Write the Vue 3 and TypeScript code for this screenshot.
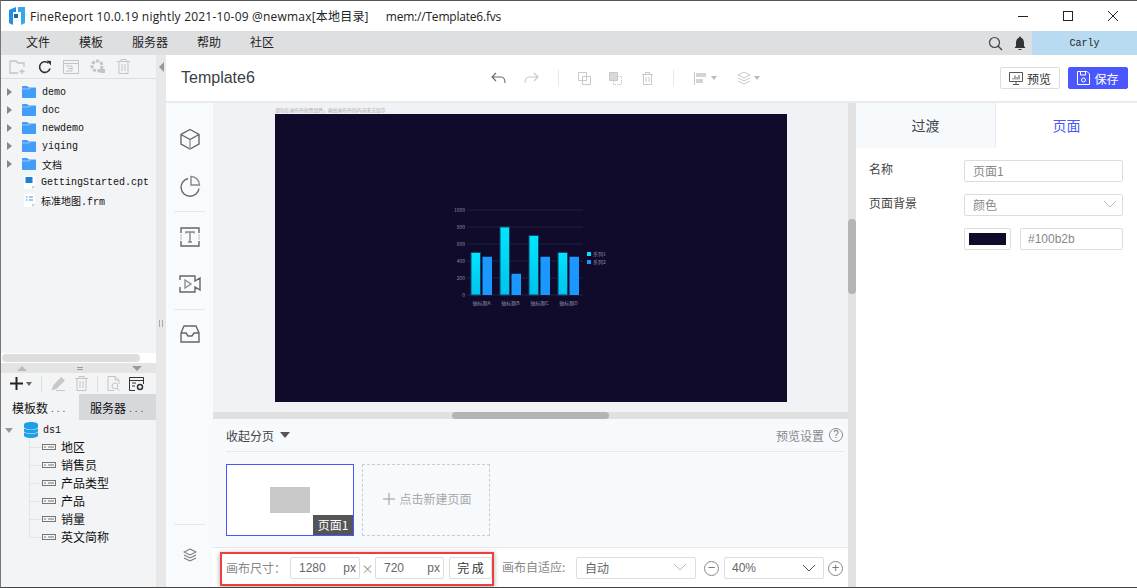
<script setup lang="ts">
const menus = ['文件', '模板', '服务器', '帮助', '社区']
const folders = ['demo', 'doc', 'newdemo', 'yiqing', '文档']
const fields = ['地区', '销售员', '产品类型', '产品', '销量', '英文简称']

const ticks = [
  { y: 210, label: '1000' },
  { y: 227, label: '800' },
  { y: 244, label: '600' },
  { y: 261, label: '400' },
  { y: 278, label: '200' },
  { y: 295, label: '0' }
]
const groups = [
  { x: 471, a: 500, b: 450, label: '轴标题A' },
  { x: 500, a: 800, b: 250, label: '轴标题B' },
  { x: 529, a: 700, b: 450, label: '轴标题C' },
  { x: 558, a: 500, b: 450, label: '轴标题D' }
]
const barH = (v: number) => (v / 1000) * 85
</script>

<template>
  <div class="win">
    <header class="titlebar">
      <svg class="logo" width="16" height="18" viewBox="0 0 16 18">
        <path d="M0 3 L7 0 V5 H4 V18 L0 16 Z" fill="#1f8fe6" />
        <path d="M5 7 H9 V11 H5 Z" fill="#1268b8" />
        <path d="M9 0 H16 V16 L12 18 V5 H9 Z" fill="#35a6f0" />
      </svg>
      <span class="title main-title">FineReport 10.0.19 nightly 2021-10-09 @newmax[本地目录]</span>
      <span class="title path">mem://Template6.fvs</span>
      <div class="winbtns">
        <svg width="12" height="12" viewBox="0 0 12 12"><path d="M1 6.500H11" stroke="#222" /></svg>
        <svg width="12" height="12" viewBox="0 0 12 12"><rect x="1.500" y="1.500" width="9" height="9" fill="none" stroke="#222" /></svg>
        <svg width="12" height="12" viewBox="0 0 12 12"><path d="M1 1L11 11M11 1L1 11" stroke="#222" /></svg>
      </div>
    </header>

    <nav class="menubar">
      <span v-for="m in menus" :key="m" class="menu">{{ m }}</span>
      <div class="menu-right">
        <svg width="15" height="15" viewBox="0 0 15 15"><circle cx="6.500" cy="6.500" r="5" fill="none" stroke="#444" stroke-width="1.200" /><path d="M10 10L14 14" stroke="#444" stroke-width="1.400" /></svg>
        <svg class="bell" width="12" height="15" viewBox="0 0 12 15"><path d="M6 0.500C6.800 0.500 7 1.200 7 1.800C9.200 2.500 10 4.500 10 7V10L11.500 12H0.500L2 10V7C2 4.500 2.800 2.500 5 1.800C5 1.200 5.200 0.500 6 0.500Z" fill="#333" /><path d="M4.500 13.500H7.500" stroke="#333" /></svg>
        <div class="user">Carly</div>
      </div>
    </nav>

    <div class="body">
      <aside class="left">
        <div class="left-tools">
          <svg width="18" height="16" viewBox="0 0 18 16"><path d="M1 2H7L9 4H15V8M9 14H1V2M13 10V15M10.500 12.500H15.500" fill="none" stroke="#c4c4c4" stroke-width="1.300" /></svg>
          <svg width="14" height="14" viewBox="0 0 14 14"><path d="M12 8.500A5.300 5.300 0 1 1 10.500 3.200" fill="none" stroke="#333" stroke-width="1.600" /><path d="M8.500 0.500L13 1V5.500Z" fill="#333" /></svg>
          <svg width="16" height="14" viewBox="0 0 16 14"><path d="M0.500 0.500H15.500V13.500H0.500ZM0.500 3.500H15.500M3 6H9V11H3M5 8.500H9" fill="none" stroke="#c4c4c4" /></svg>
          <svg width="16" height="15" viewBox="0 0 16 15"><circle cx="7" cy="7" r="5" fill="none" stroke="#c4c4c4" stroke-width="3" stroke-dasharray="3 1.400" /><rect x="10" y="10" width="5" height="4" fill="#c4c4c4" /></svg>
          <svg width="13" height="15" viewBox="0 0 13 15"><path d="M0 2.500H13M4 2.500V0.500H9V2.500M2 2.500V14.500H11V2.500M5 5V12M8 5V12" fill="none" stroke="#c4c4c4" /></svg>
        </div>
        <div class="tree">
          <div v-for="f in folders" :key="f" class="row">
            <i class="arrow"></i>
            <svg width="14" height="12" viewBox="0 0 14 12"><path d="M0 1C0 .4.4 0 1 0H5L7 1.600H13C13.600 1.600 14 2 14 2.600V11C14 11.600 13.600 12 13 12H1C.4 12 0 11.600 0 11Z" fill="#439cf8" /><path d="M0 3H7L9 1.600" fill="none" stroke="#b8dcfd" stroke-width=".7" /></svg>
            <span class="mono">{{ f }}</span>
          </div>
          <div class="row file">
            <svg width="11" height="13" viewBox="0 0 11 13"><path d="M0 0H11V10L8 13H0Z" fill="#fff" /><rect x="1.500" y="1" width="7" height="6" fill="#1f80d8" /><path d="M8 13V10H11Z" fill="#ccc" /></svg>
            <span class="mono">GettingStarted.cpt</span>
          </div>
          <div class="row file">
            <svg width="11" height="13" viewBox="0 0 11 13"><path d="M0 0H11V10L8 13H0Z" fill="#fff" /><path d="M2 3H3.500M5 3H9M2 6H3.500M5 6H9" stroke="#3d8fd8" /><path d="M8 13V10H11Z" fill="#ccc" /></svg>
            <span class="mono">标准地图.frm</span>
          </div>
        </div>
        <div class="hscroll"><div class="hthumb"></div></div>
        <div class="grip">
          <i class="tri-up"></i>
          <span class="equals"></span>
          <i class="tri-down"></i>
        </div>
        <div class="ds-tools">
          <svg width="15" height="15" viewBox="0 0 15 15"><path d="M7.500 1V14M1 7.500H14" stroke="#222" stroke-width="2" /></svg>
          <i class="tri-small"></i>
          <b class="vsep"></b>
          <svg width="15" height="15" viewBox="0 0 15 15"><path d="M1 14L3 9L10 1.500L13.500 4.500L6 12ZM5 14.500H14" fill="#c8c8c8" stroke="#c8c8c8" /></svg>
          <svg width="13" height="15" viewBox="0 0 13 15"><path d="M0 2.500H13M4 2.500V.5H9V2.500M2 2.500V14.500H11V2.500M5 5V12M8 5V12" fill="none" stroke="#c4c4c4" /></svg>
          <b class="vsep"></b>
          <svg width="13" height="15" viewBox="0 0 13 15"><path d="M7 14.500H1V.5H8L12 4V8M8 .5V4H12" fill="none" stroke="#c4c4c4" /><circle cx="8" cy="10" r="3" fill="none" stroke="#c4c4c4" /><path d="M10 12.500L12.500 14.500" stroke="#c4c4c4" /></svg>
          <svg width="15" height="14" viewBox="0 0 15 14"><path d="M6 13.500H.5V.5H14.500V7M.5 3.500H14.500M3 6H7M3 9H6" fill="none" stroke="#333" /><circle cx="11" cy="10" r="2.500" fill="none" stroke="#333" stroke-width="1.500" /></svg>
        </div>
        <div class="tabs">
          <div class="tab on">模板数<em>...</em></div>
          <div class="tab">服务器<em>...</em></div>
        </div>
        <div class="ds">
          <div class="ds-root">
            <i class="arrow down"></i>
            <svg width="14" height="16" viewBox="0 0 14 16"><path d="M0 2.500C0 1 3 0 7 0S14 1 14 2.500V5C14 6.500 11 7.500 7 7.500S0 6.500 0 5Z" fill="#1e9fe8" /><path d="M0 6.500C2 8.200 12 8.200 14 6.500V9C14 10.500 11 11.300 7 11.300S0 10.500 0 9Z" fill="#1e9fe8" /><path d="M0 10.500C2 12.200 12 12.200 14 10.500V13.500C14 15 11 16 7 16S0 15 0 13.500Z" fill="#1e9fe8" /></svg>
            <span class="mono">ds1</span>
          </div>
          <div class="ds-fields">
            <div v-for="f in fields" :key="f" class="field">
              <span class="line"></span>
              <svg width="14" height="6" viewBox="0 0 14 6"><rect x=".5" y=".5" width="13" height="5" fill="none" stroke="#777" /><path d="M2 3H4M6 3H12" stroke="#777" /></svg>
              <span class="name">{{ f }}</span>
            </div>
          </div>
        </div>
      </aside>

      <div class="split">
        <i class="tri-left"></i>
        <span class="split-grip"></span>
      </div>

      <main class="main">
        <div class="head">
          <span class="doc">Template6</span>
          <div class="head-tools">
            <svg width="15" height="12" viewBox="0 0 15 12"><path d="M5 1L1 5L5 9M1 5H10C12.500 5 14 7 14 11" fill="none" stroke="#666" stroke-width="1.100" /></svg>
            <svg class="ml18" width="15" height="12" viewBox="0 0 15 12"><path d="M10 1L14 5L10 9M14 5H5C2.500 5 1 7 1 11" fill="none" stroke="#c8c8c8" stroke-width="1.100" /></svg>
            <b class="hsep"></b>
            <svg class="copy" width="13" height="13" viewBox="0 0 13 13"><path d="M.5.5H8.500V8.500H.5ZM4.500 4.500H12.500V12.500H4.500Z" fill="none" stroke="#c8c8c8" /></svg>
            <svg class="ml18" width="13" height="13" viewBox="0 0 13 13"><path d="M.5.5H8.500V8.500H.5Z" fill="#d8d8d8" stroke="#c8c8c8" /><path d="M4.500 8.500V12.500H12.500V4.500H8.500" fill="none" stroke="#c8c8c8" stroke-dasharray="1.500 1" /></svg>
            <svg class="ml20" width="11" height="13" viewBox="0 0 11 13"><path d="M0 2.500H11M3.500 2.500V.5H7.500V2.500M1.500 2.500V12.500H9.500V2.500M4 5V10M7 5V10" fill="none" stroke="#c8c8c8" /></svg>
            <b class="hsep s2"></b>
            <svg class="ml20" width="14" height="13" viewBox="0 0 14 13"><path d="M.5 0V13" stroke="#c8c8c8" /><rect x="2" y="1" width="10" height="4" fill="#d4d4d4" /><rect x="2" y="7" width="7" height="4" fill="#d4d4d4" /></svg>
            <i class="tri-tiny"></i>
            <svg class="ml20" width="14" height="14" viewBox="0 0 14 14"><path d="M7 1L13 4L7 7L1 4ZM1 7L7 10L13 7M1 10L7 13L13 10" fill="none" stroke="#c8c8c8" /></svg>
            <i class="tri-tiny"></i>
          </div>
          <div class="head-btns">
            <button class="btn">
              <svg width="14" height="13" viewBox="0 0 14 13"><path d="M.5.5H13.500V9.500H.5ZM4 12.500H10M7 9.500V12.500" fill="none" stroke="#555" /><path d="M4 7.500V6M6 7.500V3.500M8 7.500V5M10 7.500V3" stroke="#555" /></svg>
              预览
            </button>
            <button class="btn primary">
              <svg width="13" height="14" viewBox="0 0 13 14"><path d="M.5.5H10L12.500 3V13.500H.5ZM3.500.5V4H8.500V.5" fill="none" stroke="#fff" /><circle cx="6.500" cy="9" r="2" fill="none" stroke="#fff" /></svg>
              保存
            </button>
          </div>
        </div>

        <div class="work">
          <div class="palette">
            <svg width="22" height="22" viewBox="0 0 22 22"><path d="M11 1.500L20 6.500V16L11 21L2 16V6.500ZM2 6.500L11 11.500L20 6.500" fill="none" stroke="#666" stroke-width="1.400" /><path d="M11 11.500V21" stroke="#999" stroke-width="1.400" /></svg>
            <svg class="p2" width="22" height="22" viewBox="0 0 22 22"><path d="M9 3.500A9 9 0 1 0 20 13.500" fill="none" stroke="#666" stroke-width="1.400" /><path d="M12 1.500A8.500 8.500 0 0 1 20.500 10H12Z" fill="none" stroke="#888" stroke-width="1.400" /></svg>
            <hr class="pline l1" />
            <svg class="p3" width="20" height="20" viewBox="0 0 20 20"><path d="M1 6V1H19V6M1 14V19H19V14" fill="none" stroke="#666" stroke-width="1.400" /><path d="M1 7V13M19 7V13" stroke="#bbb" /><path d="M6 6.500V5H14V6.500M10 5V15M8 15H12" fill="none" stroke="#888" stroke-width="1.400" /></svg>
            <svg class="p4" width="22" height="18" viewBox="0 0 22 18"><path d="M1 5V1H16V6L21 3V15L16 12V17H1V12" fill="none" stroke="#666" stroke-width="1.400" /><path d="M6 5L12 9L6 13Z" fill="none" stroke="#888" stroke-width="1.300" /></svg>
            <hr class="pline l2" />
            <svg class="p5" width="20" height="18" viewBox="0 0 20 18"><path d="M1 8L4 1H16L19 8V17H1ZM1 8H6L8 11H12L14 8H19" fill="none" stroke="#666" stroke-width="1.400" /></svg>
            <div class="grow"></div>
            <hr class="pline" />
            <svg class="p6" width="14" height="14" viewBox="0 0 14 14"><path d="M7 1L13 4L7 7L1 4ZM1 7L7 10L13 7M1 10L7 13L13 10" fill="none" stroke="#777" stroke-width="1.100" /></svg>
          </div>

          <div class="center">
            <div class="stage">
              <div class="canvas-col">
                <div class="hint">请勿在画布外放置组件，画出画布外的内容无法显示</div>
                <div class="canvas">
                  <svg width="160" height="110" viewBox="451 203 160 110">
                    <defs>
                      <linearGradient id="cy" x1="0" y1="0" x2="0" y2="1">
                        <stop offset="0" stop-color="#00e6ff" />
                        <stop offset="1" stop-color="#00c2ea" />
                      </linearGradient>
                    </defs>
                    <g v-for="t in ticks" :key="t.y">
                      <line x1="467" x2="583" :y1="t.y" :y2="t.y" stroke="#1c2242" />
                      <text class="axis" x="465" :y="t.y + 1.500" text-anchor="end">{{ t.label }}</text>
                    </g>
                    <g v-for="g in groups" :key="g.x">
                      <rect :x="g.x" :y="295 - barH(g.a)" width="9.500" :height="barH(g.a)" fill="url(#cy)" stroke="#0b4a6e" />
                      <rect :x="g.x + 11.500" :y="295 - barH(g.b)" width="9.500" :height="barH(g.b)" fill="#1b98ff" />
                      <text class="axis" :x="g.x + 10.500" y="305" text-anchor="middle">{{ g.label }}</text>
                    </g>
                    <rect x="587" y="252" width="4" height="4" fill="#00e6ff" />
                    <text class="axis" x="593" y="256">系列1</text>
                    <rect x="587" y="260" width="4" height="4" fill="#1b98ff" />
                    <text class="axis" x="593" y="264">系列2</text>
                  </svg>
                </div>
              </div>
              <div class="hbar"><div class="hbar-thumb"></div></div>
            </div>

            <section class="pages">
              <div class="pages-head">
                <span class="collapse">收起分页</span>
                <i class="tri-page"></i>
                <span class="setting">预览设置</span>
                <span class="help">?</span>
              </div>
              <div class="pages-list">
                <div class="thumb">
                  <div class="thumb-block"></div>
                  <span class="thumb-label">页面1</span>
                </div>
                <div class="newpage">
                  <svg width="12" height="12" viewBox="0 0 12 12"><path d="M6 0V12M0 6H12" stroke="#999" /></svg>
                  <span>点击新建页面</span>
                </div>
              </div>
            </section>

            <div class="footer">
              <div class="sizebox">
                <span class="lbl size-lbl">画布尺寸：</span>
                <div class="box size"><span>1280</span><span>px</span></div>
                <span class="times">×</span>
                <div class="box size s720"><span>720</span><span>px</span></div>
                <div class="box done">完 成</div>
              </div>
              <span class="lbl fit">画布自适应:</span>
              <div class="box auto">
                <span>自动</span>
                <svg width="14" height="8" viewBox="0 0 14 8"><path d="M1 1L7 7L13 1" fill="none" stroke="#bbb" /></svg>
              </div>
              <span class="round minus">−</span>
              <div class="box zoom">
                <span>40%</span>
                <svg width="14" height="8" viewBox="0 0 14 8"><path d="M1 1L7 7L13 1" fill="none" stroke="#555" /></svg>
              </div>
              <span class="round last">+</span>
            </div>
          </div>

          <div class="vbar"><div class="vbar-thumb"></div></div>

          <div class="props">
            <div class="prop-tabs">
              <div class="ptab">过渡</div>
              <div class="ptab on">页面</div>
            </div>
            <div class="form">
              <div class="frow">
                <label>名称</label>
                <div class="box wide">页面1</div>
              </div>
              <div class="frow">
                <label>页面背景</label>
                <div class="box wide sel">
                  <span>颜色</span>
                  <svg width="14" height="8" viewBox="0 0 14 8"><path d="M1 1L7 7L13 1" fill="none" stroke="#bbb" /></svg>
                </div>
              </div>
              <div class="frow">
                <label></label>
                <div class="box swatch"><i></i></div>
                <div class="box hex">#100b2b</div>
              </div>
            </div>
          </div>
        </div>
      </main>
    </div>
  </div>
</template>

<style>
html, body { margin: 0; padding: 0; overflow: hidden; }
</style>

<style scoped>
* { box-sizing: border-box; }
.win {
  width: 1137px;
  height: 588px;
  display: flex;
  flex-direction: column;
  border-top: 1px solid #555;
  border-bottom: 1px solid #444;
  border-left: 1px solid #777;
  font-family: "Liberation Sans", "Noto Sans CJK SC", sans-serif;
  font-size: 12px;
  color: #333;
  background: #fff;
  overflow: hidden;
}
.titlebar {
  height: 30px;
  display: flex;
  align-items: center;
  padding-left: 8px;
  flex: none;
}
.logo { margin-right: 5px; }
.title { font-family: "Open Sans", "Noto Sans CJK SC", sans-serif; font-size: 12px; color: #222; }
.main-title { letter-spacing: .2px; }
.path { margin-left: 17px; letter-spacing: -.2px; }
.winbtns { margin-left: auto; display: flex; gap: 33px; padding-right: 18px; }

.menubar {
  height: 24px;
  flex: none;
  background: #dedfe0;
  display: flex;
  align-items: center;
  padding-left: 25px;
  font-family: "Noto Sans CJK SC", sans-serif;
  color: #222;
}
.menu { margin-right: 29px; padding-bottom: 3px; }
.menu-right { margin-left: auto; display: flex; align-items: center; height: 100%; }
.bell { margin-left: 11px; margin-right: 6px; }
.user {
  width: 105px;
  height: 100%;
  margin-left: 0;
  background: #b8dbf2;
  font-family: "Liberation Mono", monospace;
  font-size: 10px;
  display: flex;
  align-items: center;
  justify-content: center;
}

.body { flex: 1; display: flex; min-height: 0; }

.left {
  width: 155px;
  flex: none;
  background: #f3f4f6;
  display: flex;
  flex-direction: column;
}
.left-tools {
  height: 24px;
  flex: none;
  display: flex;
  align-items: center;
  gap: 11px;
  padding-left: 8px;
  border-bottom: 1px solid #ddd;
}
.tree { flex: 1; padding-top: 4px; }
.row { height: 18px; display: flex; align-items: center; }
.row svg { margin-right: 6px; }
.arrow {
  width: 0;
  height: 0;
  margin: 0 10px 0 6px;
  border-left: 5px solid #888;
  border-top: 4px solid transparent;
  border-bottom: 4px solid transparent;
}
.arrow.down {
  margin: 0 11px 0 4px;
  border-left: 4px solid transparent;
  border-right: 4px solid transparent;
  border-top: 5px solid #999;
  border-bottom: 0;
}
.mono { font-family: "Liberation Mono", "Noto Sans CJK SC", monospace; font-size: 10px; color: #111; padding-top: 1px; }
.file { padding-left: 23px; }
.file svg { margin-right: 6px; }
.hscroll { height: 10px; background: #fff; padding: 1px 16px 0 1px; flex: none; }
.hthumb { height: 8px; background: #ddd; border-radius: 4px; }
.grip {
  height: 10px;
  flex: none;
  background: #e4e4e4;
  display: flex;
  align-items: center;
  justify-content: space-between;
  padding: 0 14px 0 16px;
}
.tri-up { border: 5px solid transparent; border-top: 0; border-bottom: 5px solid #bbb; }
.tri-down { border: 5px solid transparent; border-bottom: 0; border-top: 5px solid #999; }
.equals { width: 6px; height: 3px; border-top: 1px solid #999; border-bottom: 1px solid #999; }
.ds-tools {
  height: 21px;
  flex: none;
  display: flex;
  align-items: center;
  padding-left: 8px;
  gap: 9px;
}
.tri-small { border: 3px solid transparent; border-bottom: 0; border-top: 4px solid #666; margin-left: -7px; }
.vsep { width: 1px; height: 16px; background: #ddd; }
.tabs { height: 26px; flex: none; display: flex; font-family: "Noto Sans CJK SC", sans-serif; }
.tab {
  width: 78px;
  background: #d6d8dc;
  padding-left: 11px;
  display: flex;
  align-items: center;
  color: #111;
  border-left: 1px solid #f3f4f6;
}
.tab.on { background: #f3f4f6; width: 77px; border: 0; }
.tab em { font-style: normal; letter-spacing: 3px; margin-left: 3px; color: #555; font-size: 10px; }
.ds { height: 167px; flex: none; padding-top: 1px; }
.ds-root { height: 18px; display: flex; align-items: center; }
.ds-root svg { margin-right: 5px; }
.ds-fields { margin: -1px 0 0 28px; border-left: 1px solid #e4e4e4; height: 100px; }
.field { height: 18px; display: flex; align-items: center; }
.line { width: 12px; height: 1px; background: #e4e4e4; }
.field svg { margin-right: 5px; }
.name { font-family: "Noto Sans CJK SC", sans-serif; color: #111; padding-bottom: 1px; }

.split {
  width: 10px;
  flex: none;
  background: #e8e8e8;
  display: flex;
  flex-direction: column;
  align-items: center;
  padding-top: 7px;
}
.tri-left { border: 5px solid transparent; border-left: 0; border-right: 5px solid #999; }
.split-grip { width: 4px; height: 7px; margin-top: 248px; border-left: 1px solid #aaa; border-right: 1px solid #aaa; }

.main { flex: 1; min-width: 0; display: flex; flex-direction: column; }
.head {
  height: 48px;
  flex: none;
  display: flex;
  align-items: center;
  padding: 0 9px 0 15px;
  border-bottom: 2px solid #e9ebef;
  background: #fff;
}
.doc { font-size: 16px; color: #3a3f45; width: 310px; }
.head-tools { display: flex; align-items: center; }
.ml18 { margin-left: 18px; }
.ml20 { margin-left: 20px; }
.copy { margin-left: 19px; }
.hsep { width: 1px; height: 18px; background: #e8e8e8; margin-left: 19px; }
.s2 { margin-left: 20px; }
.tri-tiny { border: 3px solid transparent; border-bottom: 0; border-top: 4px solid #bbb; margin-left: 3px; }
.head-btns { margin-left: auto; display: flex; gap: 8px; }
.btn {
  width: 60px;
  height: 22px;
  border: 1px solid #ddd;
  border-radius: 2px;
  background: #fff;
  display: flex;
  align-items: center;
  justify-content: center;
  gap: 4px;
  padding: 0;
  font: 12px "Noto Sans CJK SC", sans-serif;
  color: #333;
}
.primary { background: #4a57ff; border-color: #4a57ff; color: #fff; }

.work { flex: 1; display: flex; min-height: 0; }
.palette {
  width: 47px;
  flex: none;
  background: #f7fbfe;
  display: flex;
  flex-direction: column;
  align-items: center;
  padding-top: 25px;
}
.p2 { margin-top: 25px; }
.pline { width: 31px; height: 1px; margin: 0; border: 0; background: #e6e8ea; flex: none; }
.l1 { margin-top: 14px; }
.p3 { margin-top: 15px; }
.p4 { margin-top: 28px; }
.l2 { margin-top: 16px; }
.p5 { margin-top: 15px; }
.grow { flex: 1; }
.p6 { margin: 23px 0 25px; }

.center { width: 635px; flex: none; display: flex; flex-direction: column; }
.stage { height: 316px; flex: none; background: #f0f2f6; display: flex; flex-direction: column; }
.canvas-col { flex: 1; padding: 3px 0 0 62px; }
.hint { height: 8px; font: 5px/8px "Noto Sans CJK SC", sans-serif; color: #aaa; white-space: nowrap; letter-spacing: -.2px; }
.canvas {
  width: 512px;
  height: 288px;
  margin-top: 0;
  background: #100b2b;
  display: flex;
  align-items: center;
  justify-content: center;
}
.axis { font: 5px "Noto Sans CJK SC", sans-serif; fill: #8b8ea6; }
.hbar { height: 7px; background: #e0e0e0; flex: none; padding-left: 239px; }
.hbar-thumb { width: 157px; height: 100%; background: #b4b4b4; border-radius: 4px; }

.pages { height: 128px; flex: none; background: #f6fafd; padding: 0 4px 0 13px; }
.pages-head {
  height: 33px;
  display: flex;
  align-items: center;
  border-bottom: 1px solid #e6e9ec;
  font-family: "Noto Sans CJK SC", sans-serif;
}
.collapse { color: #444; }
.tri-page { border: 5.500px solid transparent; border-bottom: 0; border-top: 6px solid #555; margin-left: 6px; }
.setting { margin-left: auto; color: #888; }
.help {
  width: 14px;
  height: 14px;
  border: 1px solid #888;
  border-radius: 50%;
  margin: 0 1px 0 5px;
  color: #777;
  font: 10px/12px "Liberation Sans", sans-serif;
  text-align: center;
}
.pages-list { display: flex; gap: 8px; padding-top: 12px; }
.thumb {
  position: relative;
  width: 128px;
  height: 72px;
  background: #fff;
  border: 1px solid #4a57ff;
  display: flex;
  align-items: center;
  justify-content: center;
}
.thumb-block { width: 40px; height: 26px; background: #c8c8c8; }
.thumb-label {
  position: absolute;
  right: 0;
  bottom: 0;
  width: 40px;
  height: 20px;
  background: #555;
  color: #fff;
  text-align: center;
  font: 12px/19px "Noto Sans CJK SC", sans-serif;
}
.newpage {
  width: 128px;
  height: 72px;
  border: 1px dashed #ccc;
  display: flex;
  align-items: center;
  justify-content: center;
  gap: 4px;
  padding: 0 0 3px 3px;
  color: #a8a8a8;
  font-family: "Noto Sans CJK SC", sans-serif;
}

.footer {
  flex: 1;
  display: flex;
  align-items: center;
  background: #fff;
  border-top: 1px solid #e6e9ec;
  padding-left: 7px;
  font-family: "Noto Sans CJK SC", sans-serif;
  min-height: 0;
}
.sizebox {
  width: 274px;
  height: 34px;
  flex: none;
  margin-top: 3px;
  display: flex;
  align-items: center;
  padding: 0 0 2px 4px;
  border: 2px solid #ee3f3f;
  box-shadow: 0 1px 5px rgba(0, 0, 0, .35);
}
.lbl { color: #888; padding-bottom: 2px; white-space: nowrap; }
.size-lbl { width: 60px; flex: none; }
.box {
  height: 22px;
  border: 1px solid #ddd;
  border-radius: 2px;
  background: #fff;
  display: flex;
  align-items: center;
  color: #666;
  padding-bottom: 2px;
  flex: none;
}
.size { width: 70px; justify-content: space-between; margin-left: 4px; padding: 0 3px 0 8px; font-family: "Liberation Sans", sans-serif; }
.times { width: 15px; flex: none; text-align: center; color: #999; }
.s720 { width: 69px; margin-left: 0; }
.done { width: 43px; margin-left: 5px; justify-content: center; color: #333; }
.fit { margin: 0 0 0 8px; width: 74px; flex: none; }
.auto { width: 120px; justify-content: space-between; padding: 0 8px 2px; margin-top: 1px; margin-left: 0; }
.round {
  width: 15px;
  height: 15px;
  border: 1px solid #888;
  border-radius: 50%;
  margin: 1px 0 0 6px;
  color: #777;
  font: 13px/12px "Liberation Sans", sans-serif;
  text-align: center;
  flex: none;
}
.minus { margin-left: 8px; }
.last { margin-left: 4px; }
.zoom { width: 100px; justify-content: space-between; padding: 0 7px; margin: 1px 0 0 5px; font-family: "Liberation Sans", sans-serif; }

.vbar { width: 8px; flex: none; background: #e2e2e2; }
.vbar-thumb { width: 100%; height: 75px; margin-top: 116px; background: #b4b4b4; border-radius: 4px; }

.props { flex: 1; min-width: 0; background: #fff; }
.prop-tabs { height: 45px; display: flex; }
.ptab {
  flex: 1;
  display: flex;
  align-items: center;
  justify-content: center;
  padding-bottom: 2px;
  background: #f6fafd;
  border-right: 1px solid #e9edf2;
  font: 14px "Noto Sans CJK SC", sans-serif;
  color: #444;
}
.ptab:first-child { flex: none; width: 140px; }
.ptab.on { background: #fff; color: #4a57ff; border: 0; }
.form { padding: 12px 14px 0 13px; font-family: "Noto Sans CJK SC", sans-serif; }
.frow { display: flex; align-items: center; height: 22px; margin-bottom: 12px; }
.frow label { width: 95px; flex: none; color: #444; padding-bottom: 5px; }
.wide { width: 159px; padding: 0 8px 2px; color: #888; }
.sel { justify-content: space-between; padding-right: 5px; }
.swatch { width: 47px; padding: 4px; }
.swatch i { display: block; width: 100%; height: 100%; background: #100b2b; }
.hex { width: 103px; margin-left: 9px; padding: 0 0 0 7px; color: #888; font-family: "Liberation Sans", sans-serif; }
</style>
